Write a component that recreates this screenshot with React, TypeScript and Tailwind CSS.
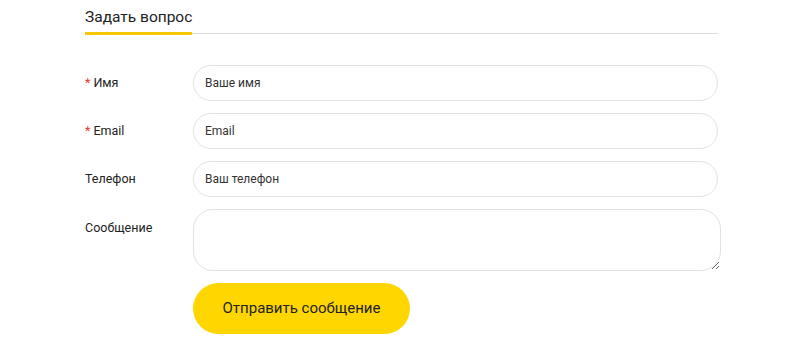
import { useState } from 'react'

const fields = [
  { id: 'name', label: 'Имя', placeholder: 'Ваше имя', required: true },
  { id: 'email', label: 'Email', placeholder: 'Email', required: true },
  { id: 'phone', label: 'Телефон', placeholder: 'Ваш телефон', required: false },
]

export default function App() {
  const [values, setValues] = useState<Record<string, string>>({})

  return (
    <div className="min-h-[344px] bg-white font-['Roboto',sans-serif] text-[#222]">
      <div className="ml-[85px] w-[636px] pt-[7px]">
        {/* Heading */}
        <div className="mr-[3px] flex border-b border-[#dedede]">
          <h2 className="-mb-[2px] border-b-[3px] border-[#f5c800] pb-[5px] text-[15.5px] leading-[20px] text-[#222]">
            Задать вопрос
          </h2>
        </div>

        {/* Form */}
        <form className="mt-[31px] flex flex-col gap-3" onSubmit={(e) => e.preventDefault()}>
          {fields.map((f) => (
            <div key={f.id} className="flex items-center">
              <label className="w-[108px] shrink-0 text-[12.5px] text-[#222]">
                {f.required && <span className="mr-[3px] text-[#e53935]">*</span>}
                {f.label}
              </label>
              <input
                value={values[f.id] ?? ''}
                onChange={(e) => setValues({ ...values, [f.id]: e.target.value })}
                placeholder={f.placeholder}
                className="h-[36px] w-[525px] shrink-0 rounded-full border border-[#e2e2e2] px-[11px] text-[12px] text-[#222] outline-none placeholder:text-[#333]"
              />
            </div>
          ))}

          <div className="flex items-start">
            <label className="w-[108px] shrink-0 pt-[10px] text-[12.5px] text-[#222]">Сообщение</label>
            <textarea className="h-[62px] w-[528px] shrink-0 rounded-[20px] border border-[#e2e2e2] px-[11px] py-2 text-[12px] outline-none" />
          </div>

          <div className="flex">
            <div className="w-[108px] shrink-0" />
            <button
              type="submit"
              className="h-[51px] w-[217px] rounded-full bg-[#ffd600] text-[15px] text-[#222]"
            >
              Отправить сообщение
            </button>
          </div>
        </form>
      </div>
    </div>
  )
}
